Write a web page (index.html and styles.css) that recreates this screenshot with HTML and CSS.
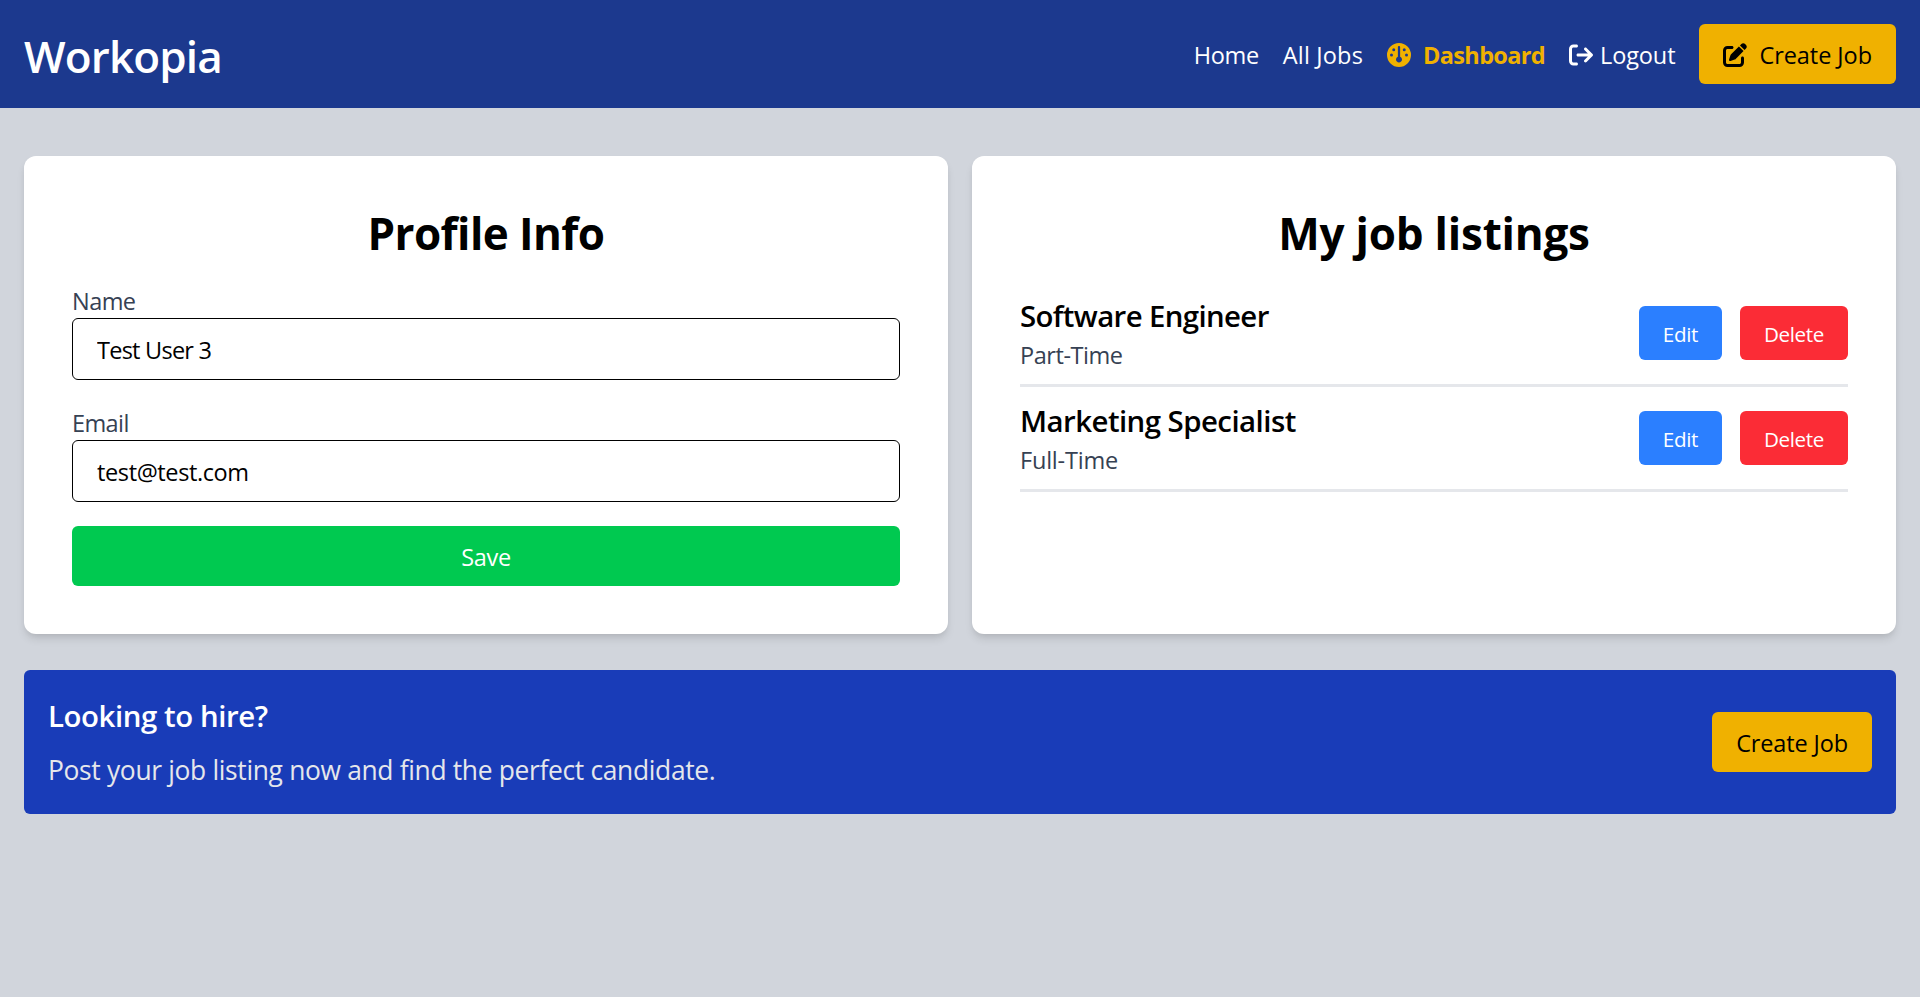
FILE: index.html
```html
<!DOCTYPE html>
<html lang="en">
<head>
<meta charset="utf-8">
<title>Workopia</title>
<link rel="stylesheet" href="styles.css">
</head>
<body>
<header class="header">
  <h1 class="logo">Workopia</h1>
  <nav class="nav">
    <a class="nav-home"><span class="text">Home</span></a>
    <a class="nav-jobs"><span class="text">All Jobs</span></a>
    <a class="nav-dashboard">
      <svg class="icon" viewBox="0 0 512 512"><path fill="currentColor" fill-rule="evenodd" d="M0 256a256 256 0 1 1 512 0A256 256 0 1 1 0 256zM256 416c35.300 0 64-28.700 64-64c0-26.900-16.500-49.900-40-59.300V88c0-13.300-10.700-24-24-24s-24 10.700-24 24V292.700c-23.500 9.500-40 32.500-40 59.300c0 35.300 28.700 64 64 64zM176 144a32 32 0 1 0 -64 0 32 32 0 1 0 64 0zM96 288a32 32 0 1 0 0-64 32 32 0 1 0 0 64zm352-32a32 32 0 1 0 -64 0 32 32 0 1 0 64 0zM368 176a32 32 0 1 0 0-64 32 32 0 1 0 0 64z"/></svg>
      <span class="text">Dashboard</span>
    </a>
    <a class="nav-logout">
      <svg class="icon" viewBox="0 0 512 512"><path fill="currentColor" d="M502.600 278.600c12.500-12.500 12.500-32.800 0-45.300l-128-128c-12.500-12.500-32.800-12.500-45.300 0s-12.500 32.800 0 45.300L402.700 224 192 224c-17.700 0-32 14.300-32 32s14.300 32 32 32l210.700 0-73.400 73.400c-12.500 12.500-12.500 32.800 0 45.300s32.800 12.500 45.300 0l128-128zM160 96c17.700 0 32-14.300 32-32s-14.300-32-32-32L96 32C43 32 0 75 0 128L0 384c0 53 43 96 96 96l64 0c17.700 0 32-14.300 32-32s-14.300-32-32-32l-64 0c-17.700 0-32-14.300-32-32l0-256c0-17.700 14.300-32 32-32l64 0z"/></svg>
      <span class="text">Logout</span>
    </a>
    <a class="create-btn create-nav">
      <svg class="icon" viewBox="0 0 512 512"><path fill="currentColor" d="M471.600 21.700c-21.900-21.900-57.300-21.900-79.200 0L362.300 51.700l97.900 97.900 30.100-30.100c21.900-21.900 21.900-57.300 0-79.200L471.600 21.700zm-299.200 220c-6.100 6.100-10.800 13.600-13.500 21.900l-29.600 88.800c-2.900 8.600-.6 18.100 5.800 24.600s15.900 8.700 24.600 5.800l88.800-29.600c8.200-2.700 15.700-7.400 21.900-13.500L437.700 172.300 339.700 74.300 172.400 241.700zM96 64C43 64 0 107 0 160L0 416c0 53 43 96 96 96l256 0c53 0 96-43 96-96l0-96c0-17.700-14.300-32-32-32s-32 14.300-32 32l0 96c0 17.700-14.300 32-32 32L96 448c-17.700 0-32-14.300-32-32l0-256c0-17.700 14.300-32 32-32l96 0c17.700 0 32-14.300 32-32s-14.300-32-32-32L96 64z"/></svg>
      <span class="text">Create Job</span>
    </a>
  </nav>
</header>

<main class="main">
  <div class="cards">
    <section class="card">
      <h2 class="card-title title-profile">Profile Info</h2>
      <form class="form">
        <div class="field">
          <label class="label label-name" for="name">Name</label>
          <input class="input input-name" id="name" type="text" value="Test User 3">
        </div>
        <div class="field">
          <label class="label label-email" for="email">Email</label>
          <input class="input input-email" id="email" type="text" value="test@test.com">
        </div>
        <button class="save-btn" type="button">Save</button>
      </form>
    </section>

    <section class="card">
      <h2 class="card-title title-jobs">My job listings</h2>
      <div class="job">
        <div>
          <h3 class="job-title job-software">Software Engineer</h3>
          <p class="job-type type-part">Part-Time</p>
        </div>
        <div class="actions">
          <a class="btn edit-btn">Edit</a>
          <button class="btn delete-btn" type="button">Delete</button>
        </div>
      </div>
      <div class="job">
        <div>
          <h3 class="job-title job-marketing">Marketing Specialist</h3>
          <p class="job-type type-full">Full-Time</p>
        </div>
        <div class="actions">
          <a class="btn edit-btn">Edit</a>
          <button class="btn delete-btn" type="button">Delete</button>
        </div>
      </div>
    </section>
  </div>

  <section class="banner">
    <div>
      <h2 class="banner-title">Looking to hire?</h2>
      <p class="banner-text">Post your job listing now and find the perfect candidate.</p>
    </div>
    <a class="create-btn"><span class="text">Create Job</span></a>
  </section>
</main>
</body>
</html>
```
FILE: styles.css
```css
* { box-sizing: border-box; margin: 0; padding: 0; }

body {
  min-height: 100vh;
  background: #d1d5dc;
  color: #000;
  font-family: "Open Sans", "Noto Sans", sans-serif;
  font-size: 23.5px;
  line-height: 36px;
}

button, input { font: inherit; color: inherit; border: 0; }

.header {
  display: flex;
  align-items: center;
  justify-content: space-between;
  height: 108px;
  padding: 0 24px;
  background: #1c398e;
  color: #fff;
}

.logo { padding-top: 4px; font-size: 44px; line-height: 54px; font-weight: 600; letter-spacing: -0.85px; }

.nav { display: flex; align-items: center; gap: 24px; white-space: nowrap; }
.text { display: block; padding-top: 2px; }
.nav-home { letter-spacing: -0.35px; }
.nav-jobs { letter-spacing: 0.17px; }
.nav-dashboard { display: flex; align-items: center; gap: 12px; color: #f0b100; font-weight: 700; letter-spacing: -0.65px; }
.nav-logout { display: flex; align-items: center; gap: 7px; letter-spacing: -0.12px; }
.icon { display: block; flex: none; width: 24px; height: 24px; margin-top: 2px; }

.create-btn {
  display: flex;
  align-items: center;
  gap: 12px;
  height: 60px;
  padding: 0 24px;
  border-radius: 6px;
  background: #f0b100;
  color: #000;
  letter-spacing: -0.13px;
}
.create-nav { letter-spacing: -0.06px; }

.main { padding: 48px 24px 0; }
.cards { display: grid; grid-template-columns: 1fr 1fr; gap: 24px; }
.card {
  padding: 48px;
  border-radius: 12px;
  background: #fff;
  box-shadow: 0 6px 9px -1.5px rgb(0 0 0 / 0.1), 0 3px 6px -3px rgb(0 0 0 / 0.1);
}
.card-title { margin-bottom: 24px; padding-top: 4px; font-size: 44px; line-height: 50px; font-weight: 700; text-align: center; }
.title-profile { letter-spacing: -0.58px; }
.title-jobs { letter-spacing: -0.23px; }

.form { display: flex; flex-direction: column; gap: 24px; }
.field { display: flex; flex-direction: column; }
.label { padding-top: 2px; line-height: 34px; color: #364153; }
.label-name { letter-spacing: -0.55px; }
.label-email { letter-spacing: -0.6px; }
.input { width: 100%; height: 62px; padding: 13px 24px 11px; border: 1px solid #000; border-radius: 6px; background: #fff; }
.input-name { letter-spacing: -0.75px; }
.input-email { letter-spacing: -0.38px; }
.save-btn { height: 60px; padding-top: 2px; border-radius: 6px; background: #00c950; color: #fff; letter-spacing: -0.35px; }

.job {
  display: flex;
  align-items: center;
  justify-content: space-between;
  padding: 12px 0;
  border-bottom: 3px solid #e5e7eb;
}
.job-title { padding-top: 2px; font-size: 29.4px; line-height: 40px; font-weight: 600; }
.job-software { letter-spacing: -0.63px; }
.job-marketing { letter-spacing: -0.54px; }
.job-type { padding-top: 2px; line-height: 34px; color: #364153; }
.type-part { letter-spacing: -0.45px; }
.type-full { letter-spacing: -0.2px; }

.actions { display: flex; gap: 18px; }
.btn {
  padding: 13px 24px 11px;
  border-radius: 6px;
  color: #fff;
  font-size: 20.6px;
  line-height: 30px;
  letter-spacing: -0.36px;
}
.edit-btn { background: #2b7fff; }
.delete-btn { background: #fb2c36; }

.banner {
  display: flex;
  align-items: center;
  justify-content: space-between;
  margin-top: 36px;
  padding: 24px;
  border-radius: 6px;
  background: #193cb8;
  color: #fff;
}
.banner-title { padding-top: 2px; font-size: 29.4px; line-height: 40px; font-weight: 600; letter-spacing: -0.42px; }
.banner-text { margin-top: 12px; padding-top: 2px; color: #e5e7eb; font-size: 26.4px; line-height: 40px; letter-spacing: -0.33px; }
```
